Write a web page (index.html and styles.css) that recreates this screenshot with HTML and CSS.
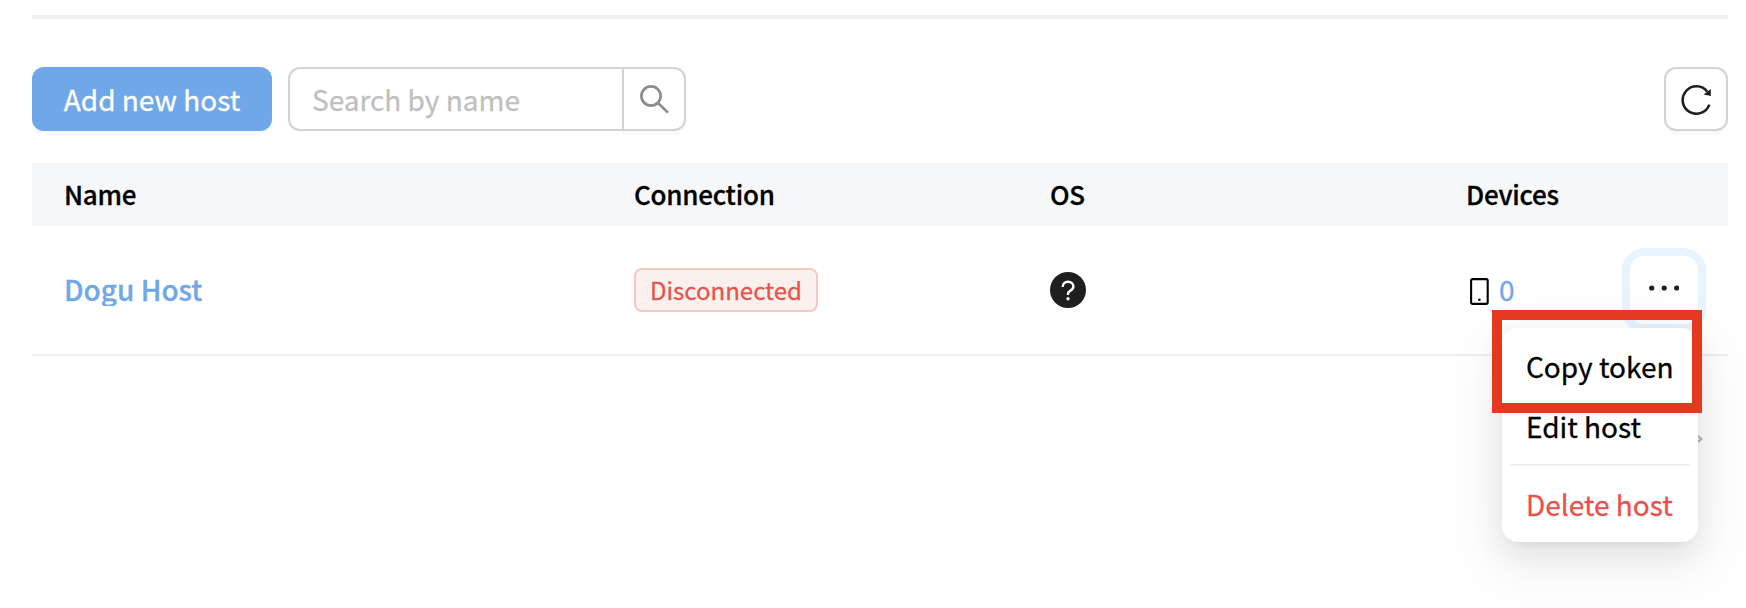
FILE: index.html
```html
<!DOCTYPE html>
<html lang="en">
<head>
<meta charset="utf-8">
<title>Hosts</title>
<link rel="stylesheet" href="styles.css">
</head>
<body>
<main class="page">
  <hr class="divider">
  <div class="toolbar">
    <button class="btn-primary">Add new host</button>
    <div class="search">
      <span class="search-input">Search by name</span>
      <button class="search-btn" aria-label="Search">
        <svg width="29" height="29" viewBox="0 0 29 29" fill="none" stroke="#8c8c8c" stroke-width="2.7"><circle cx="11" cy="11" r="9.6"/><path d="M18 18L28 27.6"/></svg>
      </button>
    </div>
    <button class="refresh" aria-label="Refresh">
      <svg width="30" height="30" viewBox="0 0 30 30"><path d="M28.3 19.6A13.7 13.7 0 1 1 26.2 6.6" fill="none" stroke="#1f1f1f" stroke-width="2.6"/><path d="M29.8 4.1V11.1L22.6 9.4Z" fill="#1f1f1f"/></svg>
    </button>
  </div>
  <div class="row head">
    <span>Name</span><span>Connection</span><span>OS</span><span>Devices</span>
  </div>
  <div class="row item">
    <div class="cell"><a class="host">Dogu Host</a></div>
    <div class="cell"><span class="tag">Disconnected</span></div>
    <div class="cell">
      <svg class="os" width="36" height="36" viewBox="0 0 36 36"><circle cx="18" cy="18" r="18" fill="#1f1f1f"/><path d="M12.7 15.1C12.7 11.8 14.9 9.8 18 9.8S23.4 11.8 23.4 14.5C23.4 17 21.5 18.2 19.8 19.1C18.5 19.8 18 20.6 18 21.8V23" fill="none" stroke="#fff" stroke-width="2.4"/><circle cx="18" cy="26.8" r="1.7" fill="#fff"/></svg>
    </div>
    <div class="cell devices">
      <svg class="phone" width="19" height="27" viewBox="0 0 19 27"><rect x="1.1" y="1.1" width="16.6" height="24.8" rx="1.6" fill="none" stroke="#000" stroke-width="2.1"/><circle cx="9.4" cy="21.8" r="1.3"/></svg>
      <a class="count">0</a>
      <div class="more">
        <svg width="30" height="6" viewBox="0 0 30 6" fill="#1f1f1f"><circle cx="2.7" cy="3" r="2.6"/><circle cx="15.2" cy="3" r="2.6"/><circle cx="27.7" cy="3" r="2.6"/></svg>
        <div class="menu">
          <div class="menu-item">Copy token</div>
          <div class="menu-item">Edit host</div>
          <hr class="menu-divider">
          <div class="menu-item danger">Delete host</div>
          <div class="highlight"></div>
        </div>
      </div>
    </div>
  </div>
  <div class="pager">
    <svg width="8" height="12" viewBox="0 0 8 12" fill="none" stroke="#b5b5b5" stroke-width="2.2"><path d="M1 1.5L6.3 6L1 10.5"/></svg>
  </div>
</main>
</body>
</html>
```
FILE: styles.css
```css
* { box-sizing: border-box; }
body {
  margin: 0;
  width: 1746px;
  height: 608px;
  overflow: hidden;
  background: #fff;
  color: #000;
  font: 400 28px/44px "Noto Sans CJK KR", "Noto Sans CJK JP", sans-serif;
  -webkit-text-stroke: .3px;
}
button { font: inherit; padding: 0; -webkit-text-stroke: inherit; }
svg { display: block; flex: none; }
.page { padding: 15px 18px 0 32px; }
.divider { height: 4px; margin: 0 0 48px; border: 0; background: #eff0f2; }
.toolbar { display: flex; height: 64px; margin-bottom: 32px; }
.btn-primary {
  width: 240px;
  border: 0;
  border-radius: 12px;
  background: #70a7e8;
  color: #fff;
  box-shadow: 0 4px 0 #f5faff;
}
.search { display: flex; width: 398px; margin-left: 16px; }
.search-input {
  flex: 1;
  padding: 8px 22px;
  border: 2px solid #d3d3d3;
  border-right: 0;
  border-radius: 12px 0 0 12px;
  color: #bfbfbf;
}
.search-btn {
  width: 64px;
  padding: 1px 0 0 16px;
  border: 2px solid #d3d3d3;
  border-radius: 0 12px 12px 0;
  background: #fff;
  box-shadow: 0 4px 0 #fafafa;
}
.refresh {
  display: grid;
  place-items: center;
  width: 64px;
  margin-left: auto;
  padding-top: 2px;
  border: 2px solid #d3d3d3;
  border-radius: 12px;
  background: #fff;
  box-shadow: 0 4px 0 #fafafa;
}
.row {
  display: grid;
  grid-template-columns: 570px 416px 416px 294px;
  align-items: center;
}
.row > * { padding-left: 32px; }
.head {
  height: 63px;
  padding-bottom: 2px;
  background: #f6f7f9;
  font-size: 26px;
  font-weight: 500;
  letter-spacing: -.25px;
}
.item { height: 130px; border-bottom: 2px solid #f0f0f0; }
.cell { display: flex; align-items: center; }
.host {
  height: 32px;
  overflow: hidden;
  color: #70a7e8;
  font-weight: 500;
  line-height: 30px;
}
.tag {
  height: 44px;
  padding: 0 14px;
  border: 2px solid #f6c6c1;
  border-radius: 8px;
  background: #fcf0ef;
  color: #e8524a;
  font-size: 24px;
  line-height: 40px;
}
.phone { margin: 2px 10px 0 4px; }
.count { color: #70a7e8; line-height: 42px; padding-bottom: 2px; }
.more {
  position: relative;
  display: grid;
  place-items: center;
  width: 68px;
  height: 68px;
  margin-left: auto;
  margin-right: 30px;
  padding: 0 1px 4px 0;
  border-radius: 14px;
  background: #fff;
  box-shadow: 0 0 0 8px #e7f4ff;
}
.menu {
  position: absolute;
  top: 72px;
  right: 0;
  z-index: 2;
  width: 196px;
  height: 214px;
  padding: 8px;
  border-radius: 16px;
  background: #fff;
  box-shadow: 0 12px 32px rgba(0,0,0,.08), 0 6px 12px -8px rgba(0,0,0,.12), 0 18px 56px 16px rgba(0,0,0,.05);
}
.menu-item { height: 60px; padding: 8px 16px; white-space: nowrap; }
.menu-divider { height: 2px; margin: 8px 0; border: 0; background: #f0f0f0; }
.danger { color: #e8524a; }
.highlight {
  position: absolute;
  top: -18px;
  left: -10px;
  width: 210px;
  height: 103px;
  border: 10px solid #e53820;
}
.pager { display: flex; justify-content: flex-end; padding: 77px 25px 0 0; }
```
